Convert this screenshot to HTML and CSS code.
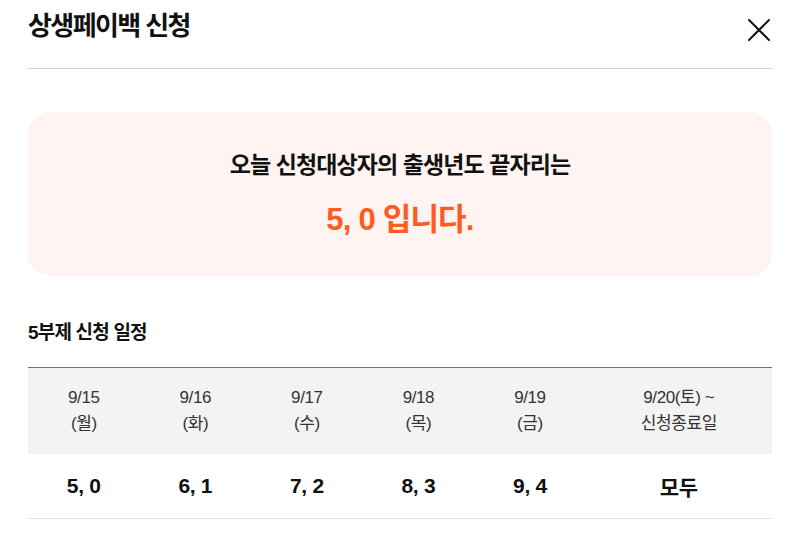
FILE: index.html
```html
<!DOCTYPE html>
<html lang="ko">
<head>
<meta charset="utf-8">
<title>상생페이백 신청</title>
<link rel="stylesheet" href="styles.css">
</head>
<body>
<div class="modal">
  <header class="modal-header">
    <h1 class="modal-title">상생페이백 신청</h1>
    <button class="close-btn" aria-label="닫기">
      <svg width="24" height="24" viewBox="0 0 24 24" fill="none" stroke="#111" stroke-width="2" stroke-linecap="round">
        <path d="M2 2 L22 22 M22 2 L2 22"/>
      </svg>
    </button>
  </header>

  <section class="notice-card">
    <p class="notice-line">오늘 신청대상자의 출생년도 끝자리는</p>
    <p class="notice-highlight">5, 0 입니다.</p>
  </section>

  <section class="schedule">
    <h2 class="schedule-title">5부제 신청 일정</h2>
    <div class="schedule-table">
      <div class="cell head">9/15<br>(월)</div>
      <div class="cell head">9/16<br>(화)</div>
      <div class="cell head">9/17<br>(수)</div>
      <div class="cell head">9/18<br>(목)</div>
      <div class="cell head">9/19<br>(금)</div>
      <div class="cell head">9/20(토) ~<br>신청종료일</div>
      <div class="cell body">5, 0</div>
      <div class="cell body">6, 1</div>
      <div class="cell body">7, 2</div>
      <div class="cell body">8, 3</div>
      <div class="cell body">9, 4</div>
      <div class="cell body">모두</div>
    </div>
  </section>
</div>
</body>
</html>
```

FILE: styles.css
```css
* { box-sizing: border-box; }
html, body { margin: 0; padding: 0; background: #fff; }
body {
  font-family: "Liberation Sans", "Noto Sans CJK KR", sans-serif;
  color: #111;
}
.modal {
  width: 800px;
  padding: 0 28px;
}
.modal-header {
  height: 69px;
  display: flex;
  align-items: flex-start;
  justify-content: space-between;
  border-bottom: 1px solid #d6d7dc;
  padding-top: 11px;
}
.modal-title {
  margin: 0;
  font-size: 26px;
  line-height: 30px;
  font-weight: 700;
  letter-spacing: -1.6px;
  color: #111;
}
.close-btn {
  border: 0;
  background: none;
  padding: 0;
  margin-top: 7px;
  margin-right: 1px;
  width: 24px;
  height: 24px;
  display: flex;
}
.notice-card {
  margin-top: 43px;
  height: 164px;
  background: #fff4f2;
  border-radius: 22px;
  display: flex;
  flex-direction: column;
  align-items: center;
  justify-content: center;
  text-align: center;
}
.notice-line {
  margin: 0;
  font-size: 23px;
  font-weight: 700;
  letter-spacing: -0.9px;
  color: #111;
  line-height: 28px;
}
.notice-highlight {
  margin: 24px 0 0;
  font-size: 31px;
  font-weight: 700;
  letter-spacing: -0.8px;
  color: #ff5a1f;
  line-height: 34px;
}
.schedule {
  margin-top: 43px;
}
.schedule-title {
  margin: 0;
  font-size: 19px;
  font-weight: 700;
  letter-spacing: -0.8px;
  line-height: 28px;
  color: #111;
}
.schedule-table {
  margin-top: 20px;
  display: grid;
  grid-template-columns: repeat(5, 1fr) 1.67fr;
  border-top: 1.5px solid #707070;
  border-bottom: 1px solid #e4e4e8;
}
.cell {
  display: flex;
  align-items: center;
  justify-content: center;
  text-align: center;
}
.cell.head {
  background: #f3f3f3;
  height: 86px;
  font-size: 17px;
  line-height: 26px;
  color: #333;
  letter-spacing: -0.4px;
}
.cell.body {
  height: 64px;
  font-size: 21px;
  font-weight: 700;
  color: #111;
  letter-spacing: -0.3px;
}
```
